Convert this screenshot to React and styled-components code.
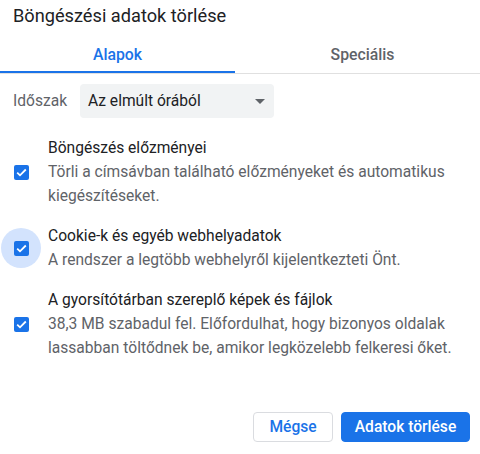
import React from "react";
import styled, { createGlobalStyle } from "styled-components";

const Global = createGlobalStyle`
  html, body { margin: 0; padding: 0; background: #fff; }
  body { font-family: Roboto, "Noto Sans", Arial, sans-serif; color: #202124; }
  * { box-sizing: border-box; }
`;

const Dialog = styled.div`
  width: 480px;
  height: 454px;
  display: flex;
  flex-direction: column;
  background: #fff;
`;

const Title = styled.h1`
  margin: 0;
  padding: 4px 13px 9px;
  font-size: 18.2px;
  line-height: 24px;
  font-weight: 400;
  color: #202124;
`;

const TabBar = styled.div`
  display: flex;
  gap: 10px;
  border-bottom: 1px solid #e0e0e0;
`;

const Tab = styled.div`
  width: 235px;
  height: 36px;
  display: flex;
  align-items: center;
  justify-content: center;
  font-size: 15.8px;
  font-weight: 500;
  color: ${(p) => (p.$active ? "#1a73e8" : "#5f6368")};
  border-bottom: 2px solid ${(p) => (p.$active ? "#1a73e8" : "transparent")};
`;

const FieldRow = styled.div`
  display: flex;
  align-items: center;
  gap: 13px;
  margin-top: 10px;
  padding-left: 13px;
`;

const Label = styled.span`
  font-size: 15.6px;
  color: #5f6368;
  width: 54px;
`;

const Select = styled.div`
  position: relative;
  width: 194px;
  height: 34px;
  border-radius: 4px;
  background: #f1f3f4;
  display: flex;
  align-items: center;
  padding-left: 8px;
  font-size: 15.6px;
  color: #202124;
`;

const Arrow = styled.span`
  position: absolute;
  right: 9px;
  top: 15px;
  width: 0;
  height: 0;
  border-left: 5px solid transparent;
  border-right: 5px solid transparent;
  border-top: 5px solid #5f6368;
`;

const List = styled.div`
  display: flex;
  flex-direction: column;
  gap: 16px;
  margin-top: 18px;
`;

const Item = styled.div`
  display: flex;
  align-items: center;
`;

const CheckArea = styled.div`
  width: 40px;
  height: 40px;
  margin-left: 1px;
  margin-right: 7px;
  flex: none;
  border-radius: 50%;
  display: flex;
  align-items: center;
  justify-content: center;
  background: ${(p) => (p.$focus ? "#d3e3fd" : "transparent")};
`;

const Box = styled.span`
  width: 15px;
  height: 15px;
  border-radius: 2px;
  background: #1a73e8;
  display: flex;
  align-items: center;
  justify-content: center;
`;

const Text = styled.div`
  flex: 1;
  padding-right: 10px;
  font-size: 15.6px;
  line-height: 24px;
`;

const ItemTitle = styled.div`
  color: #202124;
`;

const ItemDesc = styled.div`
  color: #5f6368;
`;

const Footer = styled.div`
  margin-top: auto;
  display: flex;
  justify-content: flex-end;
  gap: 8px;
  padding: 0 10px 12px;
`;

const Button = styled.button`
  height: 30px;
  width: ${(p) => (p.$primary ? "129px" : "80px")};
  padding: 0;
  border-radius: 4px;
  font-family: inherit;
  font-size: 15.6px;
  font-weight: 500;
  border: 1px solid ${(p) => (p.$primary ? "#1a73e8" : "#dadce0")};
  background: ${(p) => (p.$primary ? "#1a73e8" : "#fff")};
  color: ${(p) => (p.$primary ? "#fff" : "#1a73e8")};
`;

const Check = () => (
  <svg width="11" height="9" viewBox="0 0 11 9">
    <path d="M1.2 4.6 L4 7.3 L9.8 1.5" fill="none" stroke="#fff" strokeWidth="1.8" />
  </svg>
);

const items = [
  {
    title: "Böngészés előzményei",
    desc: "Törli a címsávban található előzményeket és automatikus kiegészítéseket.",
  },
  {
    title: "Cookie-k és egyéb webhelyadatok",
    desc: "A rendszer a legtöbb webhelyről kijelentkezteti Önt.",
    focus: true,
  },
  {
    title: "A gyorsítótárban szereplő képek és fájlok",
    desc: "38,3 MB szabadul fel. Előfordulhat, hogy bizonyos oldalak lassabban töltődnek be, amikor legközelebb felkeresi őket.",
  },
];

export default function App() {
  return (
    <>
      <Global />
      <Dialog>
        <Title>Böngészési adatok törlése</Title>
        <TabBar>
          <Tab $active>Alapok</Tab>
          <Tab>Speciális</Tab>
        </TabBar>
        <FieldRow>
          <Label>Időszak</Label>
          <Select>
            Az elmúlt órából
            <Arrow />
          </Select>
        </FieldRow>
        <List>
          {items.map((it) => (
            <Item key={it.title}>
              <CheckArea $focus={it.focus}>
                <Box>
                  <Check />
                </Box>
              </CheckArea>
              <Text>
                <ItemTitle>{it.title}</ItemTitle>
                <ItemDesc>{it.desc}</ItemDesc>
              </Text>
            </Item>
          ))}
        </List>
        <Footer>
          <Button>Mégse</Button>
          <Button $primary>Adatok törlése</Button>
        </Footer>
      </Dialog>
    </>
  );
}
